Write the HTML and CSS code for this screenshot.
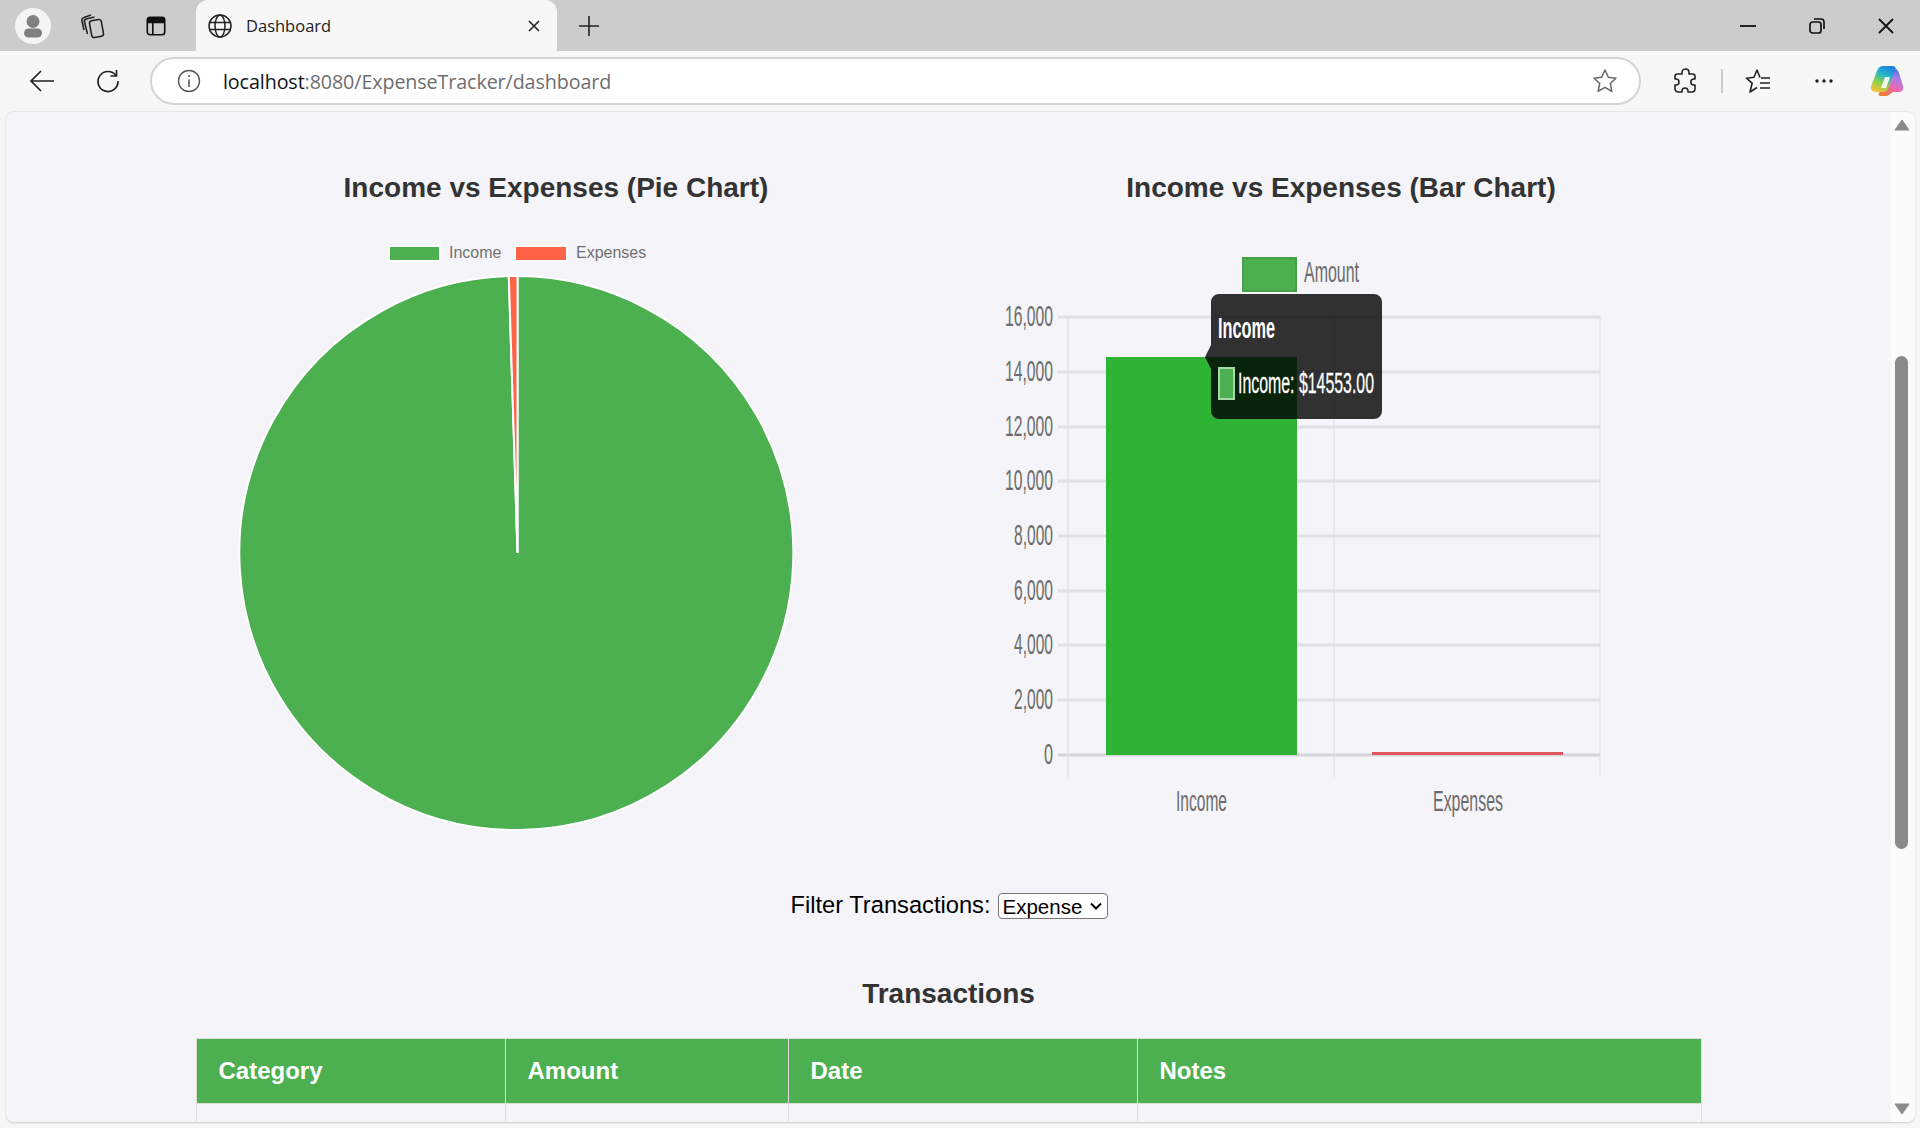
FILE: index.html
```html
<!DOCTYPE html>
<html>
<head>
<meta charset="utf-8">
<title>Dashboard</title>
<link rel="stylesheet" href="styles.css">
</head>
<body>
<div class="tabstrip">
  <div class="profile">
    <svg width="28" height="28" viewBox="0 0 28 28"><circle cx="14" cy="9.500" r="6.500" fill="#808080"/><rect x="5" y="16.500" width="18" height="9" rx="4.500" fill="#808080"/></svg>
  </div>
  <div class="btn">
    <svg width="26" height="28" viewBox="0 0 26 28" fill="none" stroke="#222" stroke-width="1.600"><rect x="9.500" y="8" width="12" height="17" rx="2.500" transform="rotate(-10 15.500 16.500)"/><path d="M6.500 22 3.500 10c-.4-1.500.4-2.600 1.800-3L13.500 5"/><path d="M3 18 1 9c-.4-1.700.5-3 2-3.400L10 3"/></svg>
  </div>
  <div class="btn">
    <svg class="vtabs" width="24" height="24" viewBox="0 0 24 24" fill="none" stroke="#111" stroke-width="1.800"><rect x="2.500" y="2.500" width="19" height="19" rx="3"/><path d="M3 4h18v4H3z" fill="#111"/><path d="M8.500 8v13"/></svg>
  </div>
  <div class="tab">
    <svg width="26" height="26" viewBox="0 0 26 26" fill="none" stroke="#222" stroke-width="1.500"><circle cx="13" cy="13" r="11"/><ellipse cx="13" cy="13" rx="5" ry="11"/><path d="M3 9.500h20M3 16.500h20"/></svg>
    <span class="tab-title">Dashboard</span>
    <svg class="tab-close" width="14" height="14" viewBox="0 0 14 14" stroke="#222" stroke-width="1.600"><path d="M2 2l10 10M12 2 2 12"/></svg>
  </div>
  <div class="btn newtab">
    <svg width="22" height="22" viewBox="0 0 22 22" stroke="#222" stroke-width="1.600"><path d="M11 1v20M1 11h20"/></svg>
  </div>
  <div class="winctl">
    <div class="winbtn"><svg width="18" height="18" viewBox="0 0 18 18" stroke="#111" stroke-width="1.800"><path d="M1 9h16"/></svg></div>
    <div class="winbtn"><svg width="18" height="18" viewBox="0 0 18 18" fill="none" stroke="#111" stroke-width="1.700"><rect x="2" y="5" width="11" height="11" rx="2.500"/><path d="M6 2h7c2 0 3 1 3 3v7"/></svg></div>
    <div class="winbtn"><svg width="18" height="18" viewBox="0 0 18 18" stroke="#111" stroke-width="1.800"><path d="M2 2l14 14M16 2 2 16"/></svg></div>
  </div>
</div>

<div class="toolbar">
  <div class="btn">
    <svg width="26" height="24" viewBox="0 0 26 24" fill="none" stroke="#222" stroke-width="1.700"><path d="M25 12H2M12 2 2 12l10 10"/></svg>
  </div>
  <div class="btn reload">
    <svg width="26" height="26" viewBox="0 0 26 26" fill="none" stroke="#222" stroke-width="1.700"><path d="M21 7.500A10 10 0 1 0 23 13"/><path d="M21.500 2v6h-6"/></svg>
  </div>
  <div class="addressbar">
    <svg width="24" height="24" viewBox="0 0 24 24" fill="none" stroke="#555" stroke-width="1.400"><circle cx="12" cy="12" r="10.500"/><path d="M12 10.500V18" stroke-width="1.600"/><circle cx="12" cy="7" r="1" fill="#555" stroke="none"/></svg>
    <span class="url"><b>localhost</b>:8080/ExpenseTracker/dashboard</span>
    <svg class="urlstar" width="26" height="26" viewBox="0 0 26 26" fill="none" stroke="#666" stroke-width="1.500" stroke-linejoin="round"><path d="M13 2l3.300 7.300 7.700.9-5.700 5.300 1.600 7.900-6.900-4-6.900 4 1.600-7.900L2 10.200l7.700-.9z"/></svg>
  </div>
  <div class="btn">
    <svg width="24" height="26" viewBox="0 0 24 26" fill="none" stroke="#222" stroke-width="1.600" stroke-linejoin="round"><path d="M9 4.500C9 2 11 1 12.500 1S16 2 16 4.500V6h3.500C21.500 6 22 7 22 8.500V11h-1c-2 0-3.200 1.300-3.200 3s1.200 3 3.200 3h1v3.500c0 2-1 3.500-3 3.500h-4v-1c0-2-1.300-3-3-3s-3 1-3 3v1H5.500C3 24 2 22.500 2 20.500V17h1c2 0 3-1.300 3-3s-1-3-3-3H2V8.500C2 7 3 6 4.500 6H9z"/></svg>
  </div>
  <div class="toolsep"></div>
  <div class="btn favs">
    <svg width="26" height="26" viewBox="0 0 26 26" fill="none" stroke="#222" stroke-width="1.600" stroke-linejoin="round"><path d="M15 9.500 12 2 9 9.300 1.500 10.200l5.600 5L5 24l7-4.500"/><path d="M16 10h9M15 15h10M15 20h10"/></svg>
  </div>
  <div class="btn dots">
    <svg width="20" height="6" viewBox="0 0 20 6" fill="#222"><circle cx="3" cy="3" r="1.700"/><circle cx="10" cy="3" r="1.700"/><circle cx="17" cy="3" r="1.700"/></svg>
  </div>
  <div class="btn copilot">
    <svg width="34" height="32" viewBox="0 0 34 32">
      <defs>
        <linearGradient id="cpa" x1="0.700" y1="0" x2="0.300" y2="1"><stop offset="0" stop-color="#1f7fe0"/><stop offset=".35" stop-color="#25b8c8"/><stop offset=".65" stop-color="#8ccf4a"/><stop offset="1" stop-color="#f5c33b"/></linearGradient>
        <linearGradient id="cpb" x1="0.700" y1="0" x2="0.300" y2="1"><stop offset="0" stop-color="#3f6fe8"/><stop offset=".3" stop-color="#a87be8"/><stop offset=".65" stop-color="#ea6bb0"/><stop offset="1" stop-color="#f0763a"/></linearGradient>
      </defs>
      <path fill="url(#cpb)" d="M21 3h2c3 0 5 2 6 5l4 13c1 4-1 6-5 6h-5l-3 2c-2 2-3 2-6 2h-3c-2 0-3-1-2-3l8-21c1-3 2-4 4-4z"/>
      <path fill="url(#cpa)" d="M13 1h9c3 0 4 1 3 4l-7 19c-1 2-3 3-5 3H6c-4 0-6-3-5-6L7 6c1-3 3-5 6-5z"/>
      <path fill="#fff" d="M15 12h5l-4 11h-5z" opacity=".9"/>
    </svg>
  </div>
</div>

<div class="viewport">
  <div class="page">
    <div class="charts">
      <div class="chart-col">
        <h3 class="chart-title">Income vs Expenses (Pie Chart)</h3>
        <svg class="chart" viewBox="178 230 756 630">
          <rect x="389" y="246" width="51" height="15" fill="#4caf50" stroke="#fff" stroke-width="2"/>
          <text class="legend" x="449" y="258">Income</text>
          <rect x="515" y="246" width="52" height="15" fill="#ff6347" stroke="#fff" stroke-width="2"/>
          <text class="legend" x="576" y="258">Expenses</text>
          <path d="M517.500 553V276A277 277 0 1 1 508.800 276.100Z" fill="#4caf50" stroke="#fff" stroke-width="2" stroke-linejoin="bevel"/>
          <path d="M517.500 553 508.800 276.100A277 277 0 0 1 517.500 276Z" fill="#ff6347" stroke="#fff" stroke-width="2" stroke-linejoin="bevel"/>
        </svg>
      </div>
      <div class="chart-col">
        <h3 class="chart-title">Income vs Expenses (Bar Chart)</h3>
        <svg class="chart" viewBox="963 230 756 630">
          <g class="grid">
            <path d="M1058 317H1600M1058 372H1600M1058 427H1600M1058 481H1600M1058 536H1600M1058 591H1600M1058 645H1600M1058 700H1600"/>
            <path class="zero" d="M1058 755H1600"/>
          </g>
          <path class="vgrid" d="M1068 317V777M1334 317V777M1600 317V777"/>
          <g class="tick">
            <text x="1053" y="326" textLength="48" lengthAdjust="spacingAndGlyphs">16,000</text>
            <text x="1053" y="381" textLength="48" lengthAdjust="spacingAndGlyphs">14,000</text>
            <text x="1053" y="436" textLength="48" lengthAdjust="spacingAndGlyphs">12,000</text>
            <text x="1053" y="490" textLength="48" lengthAdjust="spacingAndGlyphs">10,000</text>
            <text x="1053" y="545" textLength="39" lengthAdjust="spacingAndGlyphs">8,000</text>
            <text x="1053" y="600" textLength="39" lengthAdjust="spacingAndGlyphs">6,000</text>
            <text x="1053" y="654" textLength="39" lengthAdjust="spacingAndGlyphs">4,000</text>
            <text x="1053" y="709" textLength="39" lengthAdjust="spacingAndGlyphs">2,000</text>
            <text x="1053" y="764" textLength="9" lengthAdjust="spacingAndGlyphs">0</text>
          </g>
          <g class="cat">
            <text x="1176" y="811" textLength="51" lengthAdjust="spacingAndGlyphs">Income</text>
            <text x="1433" y="811" textLength="70" lengthAdjust="spacingAndGlyphs">Expenses</text>
            <text x="1304" y="282" textLength="55" lengthAdjust="spacingAndGlyphs">Amount</text>
          </g>
          <rect x="1243" y="258" width="53" height="33" fill="#4caf50" stroke="#43a047" stroke-width="2"/>
          <rect x="1106" y="357" width="191" height="398" fill="#2eb335"/>
          <rect x="1372" y="752" width="191" height="3" fill="#e0555a"/>
          <path class="tip" d="M1219 294H1374A8 8 0 0 1 1382 302V411A8 8 0 0 1 1374 419H1219A8 8 0 0 1 1211 411V369L1205 357 1211 345V302A8 8 0 0 1 1219 294Z"/>
          <text class="tip-title" x="1218" y="338" textLength="57" lengthAdjust="spacingAndGlyphs">Income</text>
          <rect x="1219" y="368" width="15" height="31" fill="#4caf50" stroke="#a9d8ab" stroke-width="2"/>
          <text class="tip-body" x="1238" y="393" textLength="136" lengthAdjust="spacingAndGlyphs">Income: $14553.00</text>
        </svg>
      </div>
    </div>

    <div class="filter">
      <label class="filter-label" for="filter">Filter Transactions:</label>
      <select id="filter"><option>Expense</option><option>Income</option></select>
    </div>

    <h3 class="table-title">Transactions</h3>

    <table class="tx">
      <thead>
        <tr><th class="c1">Category</th><th class="c2">Amount</th><th class="c3">Date</th><th>Notes</th></tr>
      </thead>
      <tbody>
        <tr><td></td><td></td><td></td><td></td></tr>
      </tbody>
    </table>
  </div>
  <div class="scrollbar">
    <svg width="16" height="12" viewBox="0 0 16 12" fill="#8a8a8a"><path d="M8 1l7 10H1z" stroke="#8a8a8a" stroke-linejoin="round"/></svg>
    <div class="track"><div class="thumb"></div></div>
    <svg width="16" height="12" viewBox="0 0 16 12" fill="#8a8a8a"><path d="M8 11 1 1h14z" stroke="#8a8a8a" stroke-linejoin="round"/></svg>
  </div>
</div>
</body>
</html>
```

FILE: styles.css
```css
*{box-sizing:border-box;}
html,body{margin:0;padding:0;height:1128px;overflow:hidden;}
body{background:#f7f7f7;font-family:"Liberation Sans",Arial,sans-serif;color:#000;}

/* browser chrome */
.tabstrip{display:flex;align-items:center;height:51px;padding-left:15px;gap:21px;background:#ccc;}
.btn{display:flex;align-items:center;justify-content:center;width:40px;height:40px;flex:none;}
.profile{display:flex;align-items:center;justify-content:center;width:36px;height:36px;margin-right:2px;border-radius:50%;background:#f4f4f4;flex:none;}
.vtabs{margin-left:2px;width:22px;height:22px;}
.tab{display:flex;align-items:center;align-self:flex-end;width:361px;height:51px;padding:0 16px 0 11px;background:#f7f7f7;border-radius:12px 12px 0 0;flex:none;}
.tab-title{margin-left:13px;font:16.500px "Open Sans",sans-serif;color:#222;}
.tab-close{margin-left:auto;}
.newtab{margin-left:-9px;}
.winctl{display:flex;margin-left:auto;}
.winbtn{display:flex;align-items:center;justify-content:center;width:69px;height:51px;}

.toolbar{display:flex;align-items:center;height:60px;padding:0 13px 0 22px;background:#f7f7f7;}
.reload{margin-left:26px;}
.addressbar{display:flex;align-items:center;flex:1;height:48px;margin:0 24px 0 22px;padding:0 21px 0 25px;background:#fff;border:2px solid #d4d4d4;border-radius:24px;}
.url{margin-left:22px;font:19.700px "Open Sans",sans-serif;color:#6e6e6e;letter-spacing:-.1px;}
.url b{font-weight:400;color:#111;}
.urlstar{margin-left:auto;}
.toolsep{width:2px;height:24px;margin:0 16px;background:#ccc;}
.favs{margin-left:-1px;}
.dots{margin-left:26px;}
.copilot{margin-left:23px;}

/* page */
.viewport{display:flex;height:1011px;margin:0 5px 6px 6px;background:#f4f4f9;border-top:1px solid #e8e8e8;border-radius:8px;overflow:hidden;box-shadow:0 1px 2px #ccc;}
.page{flex:1;min-width:0;padding-top:60px;overflow:hidden;}
.charts{display:flex;justify-content:center;gap:29px;}
.chart-col{width:756px;}
.chart-title{margin:0 0 26px;font-size:28px;line-height:32px;text-align:center;color:#333;}
.chart{display:block;width:756px;height:630px;}

.legend{font-size:16px;fill:#707070;}
.grid path{stroke:#e0e0e6;stroke-width:3;fill:none;}
.grid .zero{stroke:#d4d4da;}
.vgrid{stroke:#dcdce0;stroke-width:1;fill:none;}
.tick text{font-size:30px;fill:#6c6c6c;text-anchor:end;}
.cat text{font-size:30px;fill:#6c6c6c;}
.tip{fill:rgba(0,0,0,.8);}
.tip-title{font-size:30px;font-weight:700;fill:#fff;}
.tip-body{font-size:30px;fill:#fff;stroke:#fff;stroke-width:.3;}

.filter{display:flex;align-items:center;justify-content:center;gap:7px;height:26px;margin-top:33px;padding-left:1px;font-size:23.700px;}
.filter-label{padding-bottom:2px;}
.filter select{appearance:none;width:110px;height:26px;padding:0 0 0 4px;font:20.500px "Liberation Sans",Arial,sans-serif;color:#000;border:1px solid #767676;border-radius:4px;background:#fff url("data:image/svg+xml,%3Csvg xmlns='http://www.w3.org/2000/svg' width='12' height='8'%3E%3Cpath d='M1 1.500l5 5 5-5' fill='none' stroke='%23000' stroke-width='2'/%3E%3C/svg%3E") no-repeat right 5px center;}

.table-title{margin:59px 0 28px;font-size:28px;line-height:32px;text-align:center;color:#333;}
.tx{width:1506px;margin:0 auto;border-collapse:collapse;table-layout:fixed;}
.tx th,.tx td{border:1px solid #ddd;}
.tx th{height:65px;padding:0 22px;font-size:24px;text-align:left;color:#fff;background:#4caf50;}
.tx td{height:70px;}
.c1{width:309px;}
.c2{width:283px;}
.c3{width:349px;}

.scrollbar{display:flex;flex-direction:column;align-items:center;width:24px;background:#fbfbfb;flex:none;padding:7px 3px 7px 0;}
.track{flex:1;width:100%;}
.thumb{width:13px;height:493px;margin:225px auto 0;border-radius:7px;background:#8a8a8a;}
```
